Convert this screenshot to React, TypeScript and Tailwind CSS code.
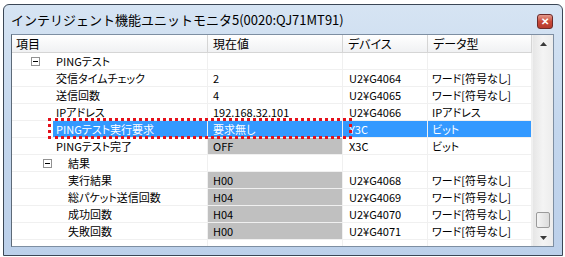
type Row = {
  name: string;
  value: string;
  device: string;
  type: string;
  lead: string;
  box?: string;
  gray?: boolean;
  selected?: boolean;
};

const rows: Row[] = [
  { name: "PINGテスト", value: "", device: "", type: "", lead: "w-[41px]", box: "pl-[19px]" },
  { name: "交信タイムチェック", value: "2", device: "U2¥G4064", type: "ワード[符号なし]", lead: "w-[41px]" },
  { name: "送信回数", value: "4", device: "U2¥G4065", type: "ワード[符号なし]", lead: "w-[41px]" },
  { name: "IPアドレス", value: "192.168.32.101", device: "U2¥G4066", type: "IPアドレス", lead: "w-[41px]" },
  { name: "PINGテスト実行要求", value: "要求無し", device: "Y3C", type: "ビット", lead: "w-[41px]", selected: true },
  { name: "PINGテスト完了", value: "OFF", device: "X3C", type: "ビット", lead: "w-[41px]", gray: true },
  { name: "結果", value: "", device: "", type: "", lead: "w-[53px]", box: "pl-[31px]" },
  { name: "実行結果", value: "H00", device: "U2¥G4068", type: "ワード[符号なし]", lead: "w-[53px]", gray: true },
  { name: "総パケット送信回数", value: "H04", device: "U2¥G4069", type: "ワード[符号なし]", lead: "w-[53px]", gray: true },
  { name: "成功回数", value: "H04", device: "U2¥G4070", type: "ワード[符号なし]", lead: "w-[53px]", gray: true },
  { name: "失敗回数", value: "H00", device: "U2¥G4071", type: "ワード[符号なし]", lead: "w-[53px]", gray: true },
];

const MinusBox = () => (
  <span className="flex h-[9px] w-[9px] items-center justify-center border border-[#919191] bg-white">
    <span className="h-px w-[5px] bg-black" />
  </span>
);

const TableRow = ({ row }: { row: Row }) => {
  const sel = row.selected;
  const cellText = sel ? "text-white bg-[#3399ff]" : "text-black";
  return (
    <div className="flex h-[17px] border-b border-[#f0f0f0]">
      <div className="flex w-[196px] border-r border-[#f0f0f0]">
        <div className={`flex shrink-0 items-center ${row.lead} ${row.box ?? ""}`}>
          {row.box && <MinusBox />}
        </div>
        <div className={`flex flex-1 items-center pl-[3px] ${cellText}`}>{row.name}</div>
      </div>
      <div
        className={`flex w-[135px] items-center border-r border-[#f0f0f0] pl-[5px] ${
          sel ? "bg-[#3399ff] text-white" : row.gray ? "bg-[#c0c0c0]" : ""
        }`}
      >
        {row.value}
      </div>
      <div className={`flex w-[85px] items-center border-r border-[#f0f0f0] pl-[6px] ${cellText}`}>
        {row.device}
      </div>
      <div className={`flex w-[104px] items-center border-r border-[#f0f0f0] pl-[4px] ${cellText}`}>
        {row.type}
      </div>
    </div>
  );
};

const Scrollbar = () => (
  <div className="flex w-[21px] flex-col bg-gradient-to-r from-[#e6e6e6] via-[#f4f4f4] to-[#ececec] border-l border-[#f0f0f0]">
    <div className="flex h-[18px] items-center justify-center">
      <svg width="7" height="4" viewBox="0 0 7 4">
        <path d="M3.5 0 L7 4 L0 4 Z" fill="#3a3a3a" />
      </svg>
    </div>
    <div className="flex-1" />
    <div className="mx-[3px] mb-[2px] h-[16px] rounded-[2px] border border-[#9a9a9a] bg-gradient-to-r from-[#f4f4f4] to-[#dcdcdc]" />
    <div className="flex h-[16px] items-center justify-center">
      <svg width="7" height="4" viewBox="0 0 7 4">
        <path d="M0 0 L7 0 L3.5 4 Z" fill="#3a3a3a" />
      </svg>
    </div>
  </div>
);

export default function App() {
  return (
    <div className="relative h-[257px] w-[565px] overflow-hidden bg-white font-['Noto_Sans_CJK_JP',sans-serif]">
      <div className="ml-[3px] mt-[4px] flex h-[252px] w-[560px] flex-col rounded-t-[6px] border border-[#3b4756] bg-gradient-to-b from-[#d6e4f3] via-[#c3d6ed] to-[#bcd0ea]">
        {/* Title bar */}
        <div className="flex h-[29px] items-center pl-[7px] pr-[9px]">
          <span className="text-[13px] leading-none text-black">
            インテリジェント機能ユニットモニタ5(0020:QJ71MT91)
          </span>
          <div className="ml-auto mt-[3px] flex h-[15px] w-[16px] items-center justify-center rounded-[3px] border border-[#6b2a2a] bg-gradient-to-b from-[#e49a8c] via-[#c9493a] to-[#b53a2d]">
            <span className="text-[10px] font-bold leading-none text-white">✕</span>
          </div>
        </div>

        {/* Content */}
        <div className="ml-[7px] flex h-[213px] w-[543px] border border-[#7d8ea2] border-l-[#5d6a78] bg-white text-[11px] leading-none [font-feature-settings:'palt']">
          <div className="flex w-[521px] flex-col">
            <div className="flex h-[18px] border-b border-[#d5d5d5] bg-gradient-to-b from-white to-[#f0f1f3] text-[12px] text-black">
              <div className="flex w-[196px] items-center border-r border-[#d5d5d5] pl-[4px]">項目</div>
              <div className="flex w-[135px] items-center border-r border-[#d5d5d5] pl-[5px]">現在値</div>
              <div className="flex w-[85px] items-center border-r border-[#d5d5d5] pl-[5px]">デバイス</div>
              <div className="flex w-[104px] items-center border-r border-[#d5d5d5] pl-[5px]">データ型</div>
            </div>
            {rows.map((r) => (
              <TableRow key={r.name} row={r} />
            ))}
            <div className="flex flex-1">
              <div className="w-[196px] border-r border-[#f0f0f0]" />
              <div className="w-[135px] border-r border-[#f0f0f0]" />
              <div className="w-[85px] border-r border-[#f0f0f0]" />
              <div className="w-[104px] border-r border-[#f0f0f0]" />
            </div>
          </div>
          <Scrollbar />
        </div>
      </div>

      {/* red annotation around selected row */}
      <div className="absolute left-[48px] top-[118px] h-[21px] w-[304px] border-[3px] border-dotted border-[#e4101a]" />
    </div>
  );
}
